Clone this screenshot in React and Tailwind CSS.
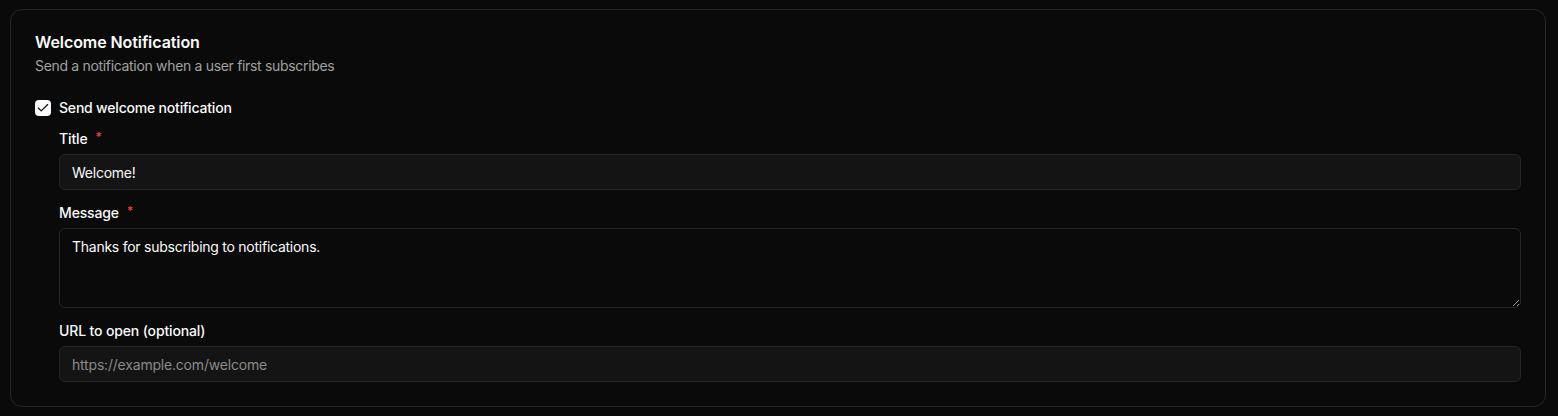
import React from "react";
import { Check } from "lucide-react";

function Label({ children, required }) {
  return (
    <label className="flex items-center gap-2 text-sm font-medium leading-none tracking-[-0.01em] text-[#fafafa] select-none">
      {children}
      {required && <span className="text-[#ef4444] text-xs leading-none -mt-1">*</span>}
    </label>
  );
}

export default function App() {
  return (
    <div
      className="min-h-[416px] bg-[#0a0a0a] pt-[9px] pb-[9px] pl-[10px] pr-[12px]"
      style={{ fontFamily: 'Inter, "Noto Sans", sans-serif' }}
    >
      <div className="flex flex-col gap-6 rounded-xl border border-[#262626] bg-[#0a0a0a] p-6">
        <div className="flex flex-col gap-1.5">
          <div className="text-base font-semibold leading-none tracking-[-0.005em] text-[#fafafa]">Welcome Notification</div>
          <div className="text-sm leading-5 tracking-[-0.023em] text-[#a1a1a1]">Send a notification when a user first subscribes</div>
        </div>
        <div className="flex flex-col gap-4">
          <div className="flex items-center gap-2">
            <div className="flex size-4 items-center justify-center rounded-[4px] bg-[#fafafa] text-[#0a0a0a]">
              <Check size={14} strokeWidth={2} />
            </div>
            <span className="text-sm font-medium leading-none tracking-[-0.014em] text-[#fafafa]">Send welcome notification</span>
          </div>
          <div className="ml-6 flex flex-col gap-4">
            <div className="flex flex-col gap-2">
              <Label required>Title</Label>
              <input
                readOnly
                defaultValue="Welcome!"
                className="h-9 w-full rounded-md border border-[#262626] bg-[#141414] px-3 py-1 text-sm tracking-[-0.018em] text-[#fafafa] outline-none"
              />
            </div>
            <div className="flex flex-col gap-2">
              <Label required>Message</Label>
              <textarea
                readOnly
                defaultValue="Thanks for subscribing to notifications."
                className="block h-20 min-h-20 w-full resize-y rounded-md border border-[#262626] bg-transparent px-3 py-2 text-sm leading-5 tracking-[-0.018em] text-[#fafafa] outline-none"
              />
            </div>
            <div className="flex flex-col gap-2">
              <Label>URL to open (optional)</Label>
              <input
                readOnly
                placeholder="https://example.com/welcome"
                className="h-9 w-full rounded-md border border-[#262626] bg-[#141414] px-3 py-1 text-sm tracking-[-0.014em] text-[#fafafa] outline-none placeholder:text-[#8a8a8a]"
              />
            </div>
          </div>
        </div>
      </div>
    </div>
  );
}
